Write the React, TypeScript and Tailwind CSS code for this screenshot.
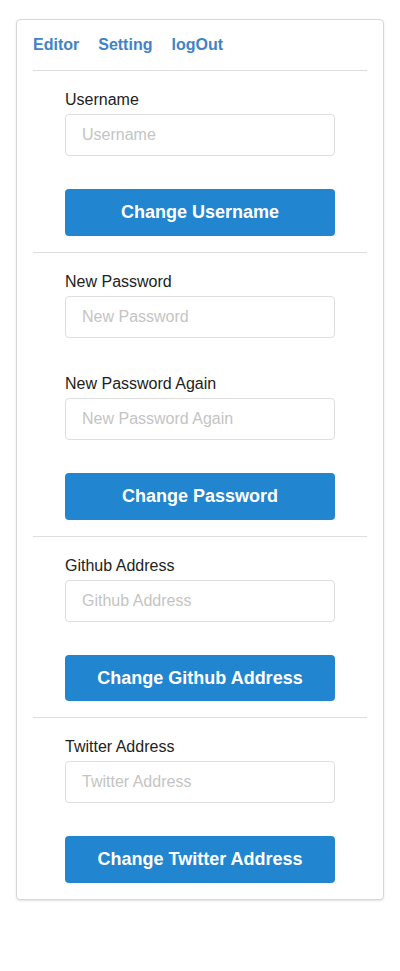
const font = { fontFamily: '"Liberation Sans", Arial, sans-serif' };

type Field = { label: string };
type Section = { fields: Field[]; button: string; tall: boolean };

const SECTIONS: Section[] = [
  { fields: [{ label: 'Username' }], button: 'Change Username', tall: true },
  { fields: [{ label: 'New Password' }, { label: 'New Password Again' }], button: 'Change Password', tall: true },
  { fields: [{ label: 'Github Address' }], button: 'Change Github Address', tall: false },
  { fields: [{ label: 'Twitter Address' }], button: 'Change Twitter Address', tall: true },
];

const FormField = ({ label, first }: { label: string; first: boolean }) => (
  <div className={first ? '' : 'mt-[35px]'}>
    <label className="block text-[16px] leading-[20px] text-[#222] pt-px -mb-px">{label}</label>
    <input
      placeholder={label}
      className="mt-[5px] block w-full h-[42px] px-4 text-[16px] border border-[#dedede] rounded-[4px] outline-none placeholder:text-[#c4c4c4]"
      style={font}
    />
  </div>
);

export default function App() {
  return (
    <div className="min-h-[971px] bg-white" style={font}>
      <div className="ml-4 mt-[19px] w-[368px] border border-[#d8d8d8] rounded-[4px] shadow-[0_1px_2px_rgba(0,0,0,0.12)] px-4 pb-4">
        {/* nav */}
        <div className="flex gap-[19px] pt-[15px] pb-[15px] text-[16px] leading-[20px] font-bold text-[#4183c4]">
          <span>Editor</span>
          <span>Setting</span>
          <span>logOut</span>
        </div>

        {SECTIONS.map((s, i) => (
          <div key={s.button} className="border-t border-[#dedede] px-8 pt-[18px]">
            {s.fields.map((f, j) => (
              <FormField key={f.label} label={f.label} first={j === 0} />
            ))}
            <button
              className={`mt-[33px] w-full rounded-[4px] bg-[#2185d0] text-white text-[18px] font-bold ${s.tall ? 'h-[47px]' : 'h-[46px]'}`}
              style={font}
            >
              {s.button}
            </button>
            {i < SECTIONS.length - 1 && <div className="h-4" />}
          </div>
        ))}
      </div>
    </div>
  );
}
